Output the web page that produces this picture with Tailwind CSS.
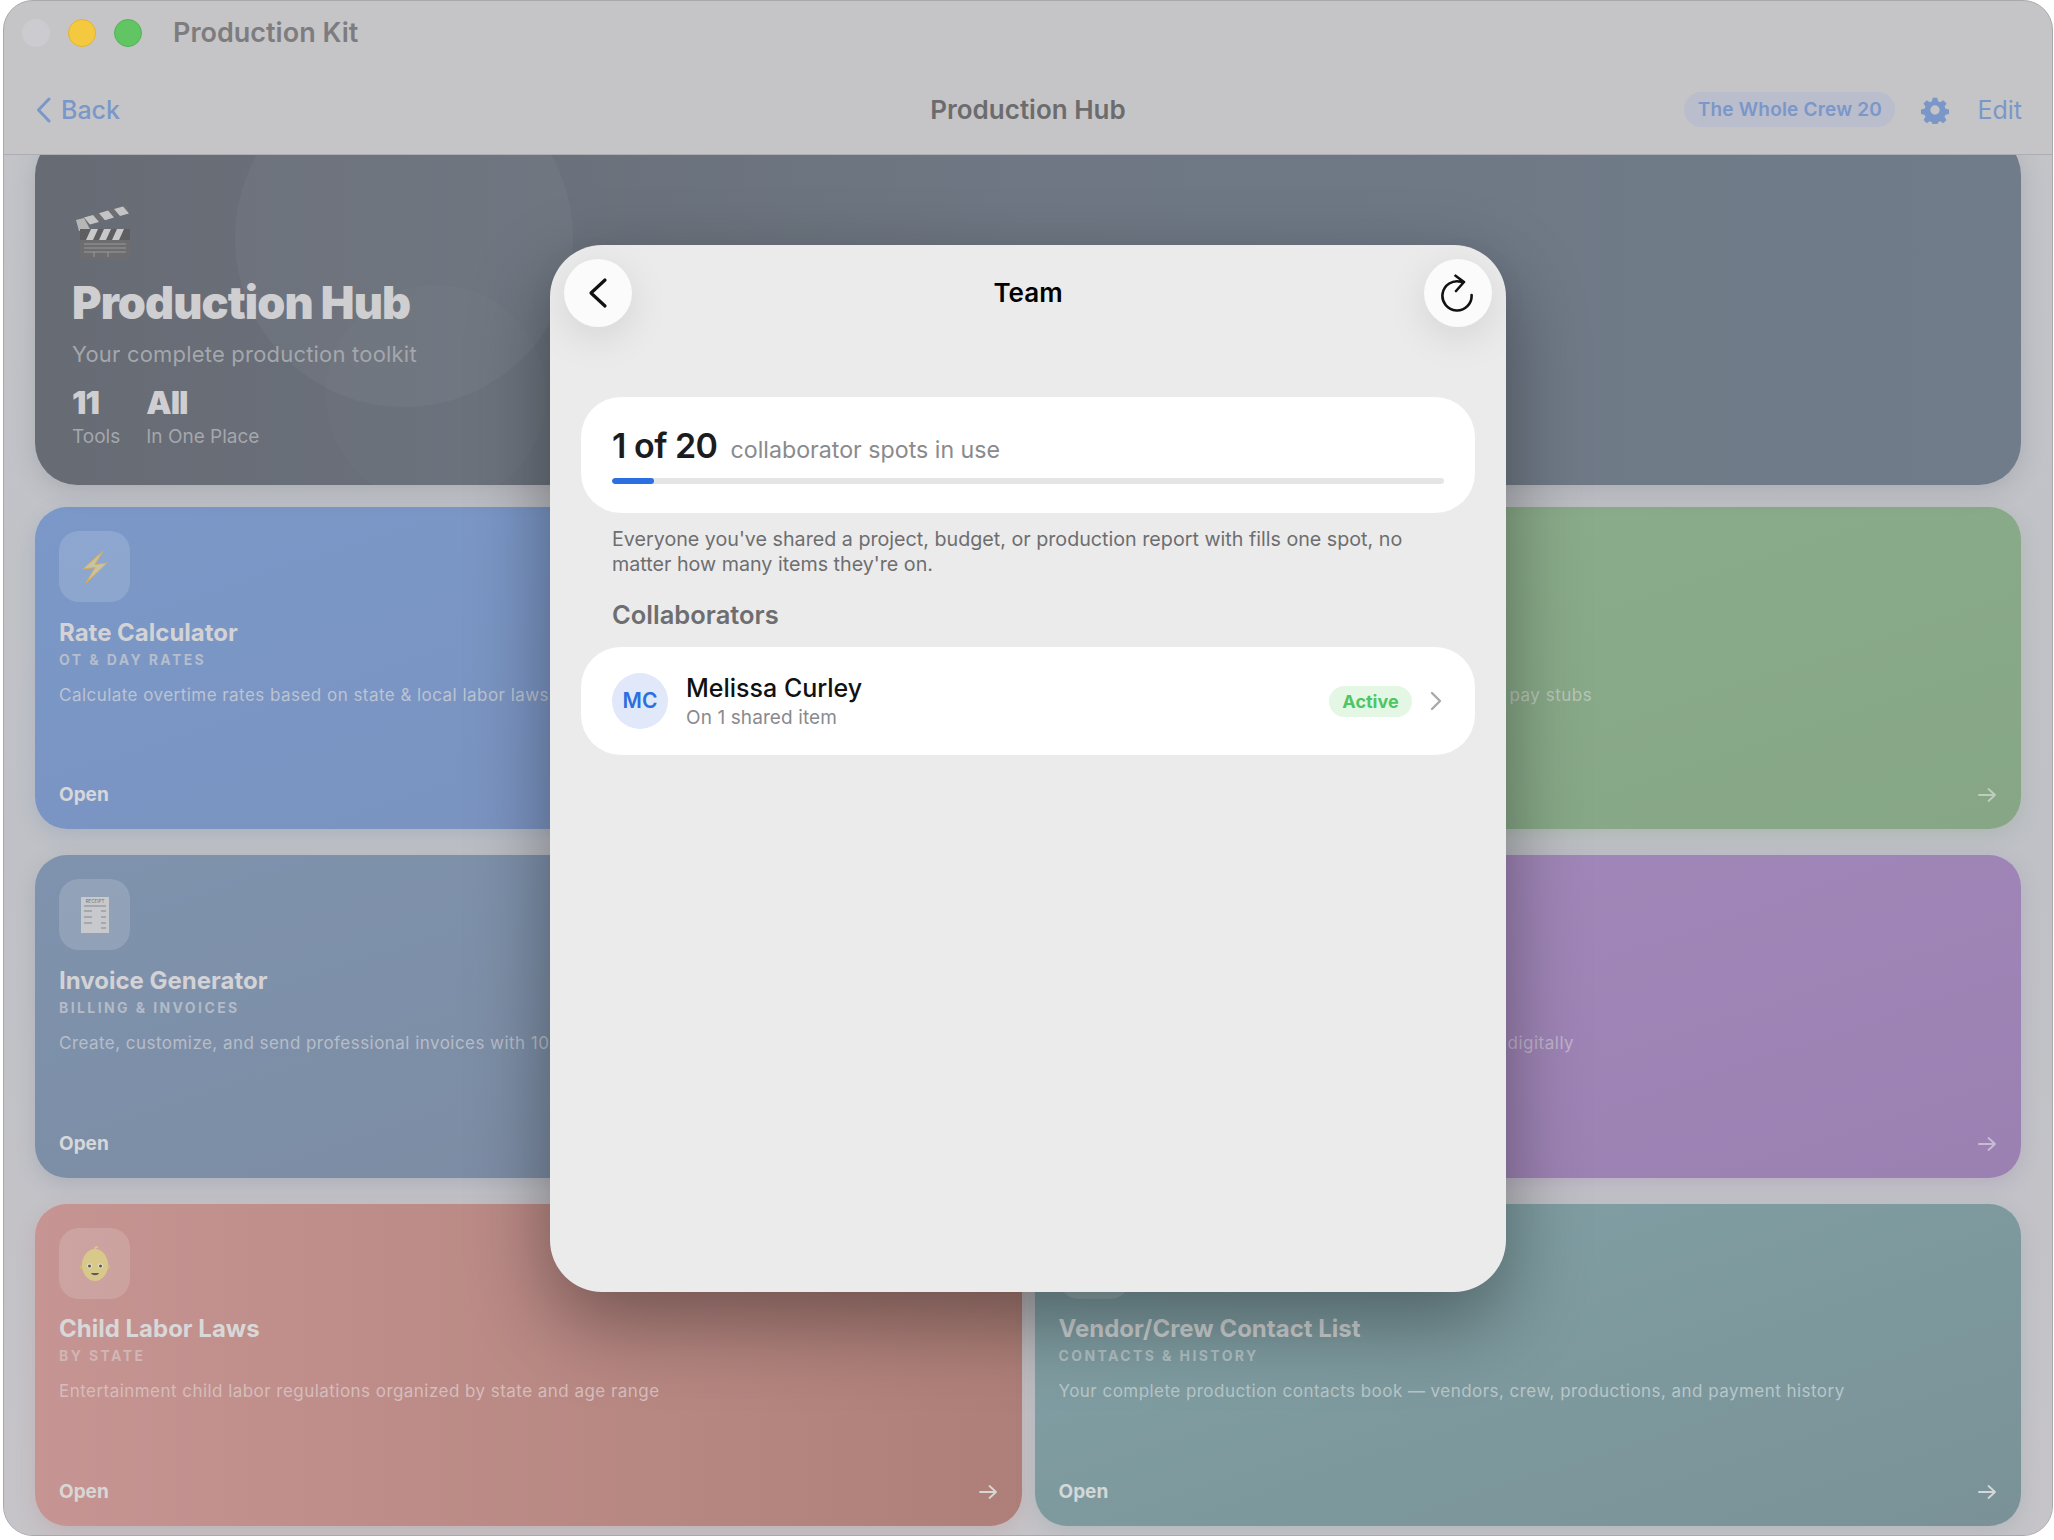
<!DOCTYPE html>
<html lang="en">
<head>
  <meta charset="UTF-8" />
  <meta name="viewport" content="width=device-width, initial-scale=1.0" />
  <title>Production Kit</title>
  <script src="https://cdn.jsdelivr.net/npm/@tailwindcss/browser@4"></script>
</head>
<body class="relative w-[2054px] h-[1540px] overflow-hidden bg-white font-['Inter',sans-serif]">
  <!-- Window -->
  <div class="relative ml-[3px] w-[2050px] h-[1536px] rounded-[30px] overflow-hidden bg-[#c5c5c7] border border-[#a9a9ab] flex flex-col">
    <!-- Title bar -->
    <div class="h-[64px] shrink-0 flex items-center pl-[18px] gap-[18px]">
      <span class="w-[28px] h-[28px] rounded-full bg-[#cbcbd0]"></span>
      <span class="w-[28px] h-[28px] rounded-full bg-[#f5c93f] border border-[#e2b430]"></span>
      <span class="w-[28px] h-[28px] rounded-full bg-[#62c564] border border-[#52b354]"></span>
      <span class="ml-[13px] text-[27px] leading-[32px] font-semibold text-[#7d7d7f]">Production Kit</span>
    </div>
    <!-- Nav bar -->
    <div class="relative h-[90px] shrink-0 flex items-center pl-[32px] pr-[30px] border-b border-[#aeaeb2] text-[#7a97c9]">
      <svg class="w-[16px] h-[26px] mr-[9px]" viewBox="0 0 16 26" fill="none" stroke="currentColor" stroke-width="3" stroke-linecap="round" stroke-linejoin="round"><path d="M13 2 2.500 13 13 24"/></svg>
      <span class="text-[25px] leading-[32px] font-medium">Back</span>
      <span class="absolute left-0 right-0 text-center text-[26px] leading-[32px] font-semibold text-[#6c6c6e]">Production Hub</span>
      <div class="ml-auto flex items-center">
        <span class="h-[35px] w-[211px] pt-[1px] rounded-full bg-[#b9bdcc] flex items-center justify-center text-[19px] font-semibold tracking-[0.2px]">The Whole Crew 20</span>
        <svg class="ml-[26px] w-[28px] h-[28px]" viewBox="0 0 24 24" fill="currentColor"><path fill-rule="evenodd" d="M10 1.500h4l.6 3 1.900.8 2.600-1.700 2.800 2.800-1.700 2.600.8 1.900 3 .6v4l-3 .6-.8 1.900 1.700 2.600-2.800 2.800-2.600-1.700-1.900.8-.6 3h-4l-.6-3-1.900-.8-2.600 1.700-2.800-2.800 1.700-2.600-.8-1.900-3-.6v-4l3-.6.8-1.900-1.700-2.600 2.800-2.800 2.600 1.700 1.900-.8.6-3ZM12 8a4 4 0 1 0 0 8 4 4 0 0 0 0-8Z"/></svg>
        <span class="ml-[28px] text-[25px] leading-[32px]">Edit</span>
      </div>
    </div>

    <!-- Scrolled content -->
    <div class="flex-1 overflow-hidden px-[31px] bg-linear-to-b from-[#c3c4c8] via-[#bfc1c6] to-[#c6c4c8]">
      <!-- Hero -->
      <div class="relative -mt-[22px] h-[352px] rounded-[42px] overflow-hidden bg-linear-to-r from-[#676b74] via-[#6e7783] to-[#707c8a] shadow-[0_6px_24px_rgba(60,70,90,0.18)] pl-[37px] flex flex-col">
        <span class="absolute left-[200px] -top-[64px] w-[338px] h-[338px] rounded-full bg-white/[0.04]"></span>
        <span class="absolute left-[291px] top-[152px] w-[220px] h-[220px] rounded-full bg-white/[0.02]"></span>
        <svg class="relative mt-[71px] ml-[3px] w-[56px] h-[56px]" viewBox="0 0 56 56">
          <path d="M3 15 52 1l2 7-49 15Z" fill="#6f6f71"/>
          <path d="m9 13.500 9-2.600 6 7-9 2.600ZM24 9.200l9-2.600 6 7-9 2.600ZM39 5l9-2.600 6 7-9 2.600Z" fill="#c4c4c5"/>
          <path d="M1 16 9 14l7 13H4Z" fill="#b6b6b7"/>
          <rect x="5" y="25" width="50" height="11" fill="#5e5e60"/>
          <path d="m16 25h7l-5 11h-7ZM29 25h7l-5 11h-7ZM42 25h7l-5 11h-7Z" fill="#c9c9ca"/>
          <rect x="5" y="36" width="50" height="19" rx="2" fill="#6d6d70"/>
          <path d="M9 40h42M9 44h42M9 48h42M19 48v5M33 48v5" stroke="#9a9a9c" stroke-width="1"/>
        </svg>
        <h1 class="relative mt-[15px] text-[45px] leading-[56px] font-black tracking-[-0.9px] text-[#cfcfd1]">Production Hub</h1>
        <p class="relative mt-[9px] text-[22px] leading-[28px] tracking-[0.2px] text-[#a4a7ac]">Your complete production toolkit</p>
        <div class="relative mt-[16px] flex gap-[26px]">
          <div>
            <div class="text-[32px] leading-[38px] font-black tracking-[-1px] text-[#cfcfd1]">11</div>
            <div class="mt-[3px] text-[19px] leading-[24px] text-[#a4a7ac]">Tools</div>
          </div>
          <div>
            <div class="text-[32px] leading-[38px] font-black tracking-[-1px] text-[#cfcfd1]">All</div>
            <div class="mt-[3px] text-[19px] leading-[24px] text-[#a4a7ac]">In One Place</div>
          </div>
        </div>
      </div>

      <!-- Tool cards -->
      <div class="mt-[22px] grid grid-cols-2 gap-x-[13px] gap-y-[26px]">
        <!-- Rate Calculator -->
        <div class="h-[322px] rounded-[32px] px-[24px] pt-[24px] pb-[22px] flex flex-col bg-linear-to-br from-[#7a98c8] to-[#7a92be] shadow-[0_6px_20px_rgba(90,120,170,0.2)]">
          <div class="w-[71px] h-[71px] rounded-[20px] bg-white/15 flex items-center justify-center">
            <svg class="w-[26px] h-[34px]" viewBox="0 0 26 34"><path d="M21 1 1 19l12-1.500L4 33l21-20-12 1.500Z" fill="#c6c4a6" stroke="#dbaa55" stroke-width="1"/></svg>
          </div>
          <h2 class="mt-[16px] text-[24px] leading-[30px] font-bold text-[#d3d3d6]">Rate Calculator</h2>
          <p class="mt-[3px] text-[14px] leading-[18px] font-bold tracking-[2.4px] text-[#b6bdcc]">OT &amp; DAY RATES</p>
          <p class="mt-[14px] text-[17px] leading-[24px] tracking-[0.46px] whitespace-nowrap text-[#bcc3d2]">Calculate overtime rates based on state &amp; local labor laws</p>
          <div class="mt-auto h-[24px] flex items-center justify-between text-[#d6d7da]">
            <span class="text-[19px] leading-[24px] font-bold">Open</span>
          </div>
        </div>
        <!-- Covered by the sheet: only the end of the line shows -->
        <div class="h-[322px] rounded-[32px] px-[24px] pt-[24px] pb-[22px] flex flex-col bg-linear-to-br from-[#8cae8c] to-[#86a686] shadow-[0_6px_20px_rgba(110,140,110,0.2)]">
          <p class="mt-[152px] pl-[451px] text-[17px] leading-[24px] tracking-[0.5px] whitespace-nowrap text-[#b9c5b8]">pay stubs</p>
          <div class="mt-auto h-[24px] flex items-center justify-end text-[#bfcdbf]">
            <svg class="w-[20px] h-[16px]" viewBox="0 0 20 16" fill="none" stroke="currentColor" stroke-width="1.800" stroke-linecap="round" stroke-linejoin="round"><path d="M2 8h16M11.500 2 18 8l-6.500 6"/></svg>
          </div>
        </div>
        <!-- Invoice Generator -->
        <div class="h-[323px] rounded-[32px] px-[24px] pt-[24px] pb-[22px] flex flex-col bg-linear-to-br from-[#7f93ae] to-[#7b8aa0] shadow-[0_6px_20px_rgba(90,105,130,0.2)]">
          <div class="w-[71px] h-[71px] rounded-[20px] bg-white/15 flex items-center justify-center">
            <svg class="w-[28px] h-[36px]" viewBox="0 0 28 36">
              <rect width="28" height="36" fill="#c7c9cc"/>
              <text x="14" y="6" text-anchor="middle" font-size="4.500" font-family="Inter, sans-serif" fill="#6f7276">RECEIPT</text>
              <path d="M3 9h22M3 14h8M20 14h5M3 20h8M20 20h5M3 26h8M20 26h5M20 31h5" stroke="#85888c" stroke-width="1"/>
            </svg>
          </div>
          <h2 class="mt-[16px] text-[24px] leading-[30px] font-bold text-[#d3d3d6]">Invoice Generator</h2>
          <p class="mt-[3px] text-[14px] leading-[18px] font-bold tracking-[2.4px] text-[#b3bbc8]">BILLING &amp; INVOICES</p>
          <p class="mt-[14px] text-[17px] leading-[24px] tracking-[0.46px] whitespace-nowrap text-[#b7bdc9]">Create, customize, and send professional invoices with 10</p>
          <div class="mt-auto h-[24px] flex items-center justify-between text-[#d6d7da]">
            <span class="text-[19px] leading-[24px] font-bold">Open</span>
          </div>
        </div>
        <!-- Covered by the sheet: only the end of the line shows -->
        <div class="h-[323px] rounded-[32px] px-[24px] pt-[24px] pb-[22px] flex flex-col bg-linear-to-br from-[#a388bb] to-[#9b81b2] shadow-[0_6px_20px_rgba(130,100,160,0.2)]">
          <p class="mt-[152px] pl-[449px] text-[17px] leading-[24px] tracking-[0.5px] whitespace-nowrap text-[#c0b3cc]">digitally</p>
          <div class="mt-auto h-[24px] flex items-center justify-end text-[#c8bcd4]">
            <svg class="w-[20px] h-[16px]" viewBox="0 0 20 16" fill="none" stroke="currentColor" stroke-width="1.800" stroke-linecap="round" stroke-linejoin="round"><path d="M2 8h16M11.500 2 18 8l-6.500 6"/></svg>
          </div>
        </div>
        <!-- Child Labor Laws -->
        <div class="h-[322px] rounded-[32px] px-[24px] pt-[24px] pb-[22px] flex flex-col bg-linear-to-r from-[#c69492] to-[#ae7f78] shadow-[0_6px_20px_rgba(170,110,110,0.2)]">
          <div class="w-[71px] h-[71px] rounded-[20px] bg-white/15 flex items-center justify-center">
            <svg class="w-[34px] h-[36px]" viewBox="0 0 34 36">
              <path d="M17 4c-1-3 2-4 3-2" fill="none" stroke="#d8c98b" stroke-width="1.500"/>
              <circle cx="4.500" cy="21" r="2.500" fill="#cdb978"/><circle cx="29.500" cy="21" r="2.500" fill="#cdb978"/>
              <ellipse cx="17" cy="19" rx="13" ry="16" fill="#d8c98b"/>
              <circle cx="11.500" cy="20" r="2.400" fill="#e6e2d2"/><circle cx="22.500" cy="20" r="2.400" fill="#e6e2d2"/>
              <circle cx="11.500" cy="20" r="1.500" fill="#55565a"/><circle cx="22.500" cy="20" r="1.500" fill="#55565a"/>
              <path d="M13 27h8c-1 3-7 3-8 0Z" fill="#5c5c5c"/>
            </svg>
          </div>
          <h2 class="mt-[15px] text-[24px] leading-[30px] font-bold text-[#d8d8d8]">Child Labor Laws</h2>
          <p class="mt-[3px] text-[14px] leading-[18px] font-bold tracking-[2.4px] text-[#d0b6b4]">BY STATE</p>
          <p class="mt-[14px] text-[17px] leading-[24px] tracking-[0.46px] whitespace-nowrap text-[#d6bdbb]">Entertainment child labor regulations organized by state and age range</p>
          <div class="mt-auto h-[24px] flex items-center justify-between text-[#d9d6d6]">
            <span class="text-[19px] leading-[24px] font-bold">Open</span>
            <svg class="w-[20px] h-[16px]" viewBox="0 0 20 16" fill="none" stroke="currentColor" stroke-width="1.800" stroke-linecap="round" stroke-linejoin="round"><path d="M2 8h16M11.500 2 18 8l-6.500 6"/></svg>
          </div>
        </div>
        <!-- Vendor/Crew Contact List -->
        <div class="h-[322px] rounded-[32px] px-[24px] pt-[24px] pb-[22px] flex flex-col bg-linear-to-br from-[#81a1a6] to-[#7a9297] shadow-[0_6px_20px_rgba(100,135,140,0.2)]">
          <div class="w-[71px] h-[71px] rounded-[20px] bg-white/15"></div>
          <h2 class="mt-[15px] text-[24px] leading-[30px] font-bold text-[#cfd3d4]">Vendor/Crew Contact List</h2>
          <p class="mt-[3px] text-[14px] leading-[18px] font-bold tracking-[2.4px] text-[#b2c0c2]">CONTACTS &amp; HISTORY</p>
          <p class="mt-[14px] text-[17px] leading-[24px] tracking-[0.46px] whitespace-nowrap text-[#b8c6c8]">Your complete production contacts book — vendors, crew, productions, and payment history</p>
          <div class="mt-auto h-[24px] flex items-center justify-between text-[#d3d8d9]">
            <span class="text-[19px] leading-[24px] font-bold">Open</span>
            <svg class="w-[20px] h-[16px]" viewBox="0 0 20 16" fill="none" stroke="currentColor" stroke-width="1.800" stroke-linecap="round" stroke-linejoin="round"><path d="M2 8h16M11.500 2 18 8l-6.500 6"/></svg>
          </div>
        </div>
      </div>
    </div>

    <!-- Team sheet -->
    <div class="absolute left-[546px] top-[244px] w-[956px] h-[1047px] rounded-[52px] bg-[#ebebeb] shadow-[0_30px_80px_rgba(0,0,0,0.38)] px-[31px]">
      <div class="relative -mx-[31px] h-[96px] flex items-start justify-between px-[14px] pt-[14px]">
        <button class="w-[68px] h-[68px] rounded-full bg-[#fbfbfb] shadow-[0_10px_40px_rgba(0,0,0,0.1)] flex items-center justify-center">
          <svg class="w-[20px] h-[32px]" viewBox="0 0 20 32" fill="none" stroke="#111" stroke-width="3.200" stroke-linecap="round" stroke-linejoin="round"><path d="M17 3 3 16l14 13"/></svg>
        </button>
        <span class="absolute left-0 right-0 top-[32px] text-center text-[26px] leading-[32px] font-semibold text-black">Team</span>
        <button class="w-[68px] h-[68px] rounded-full bg-[#fbfbfb] shadow-[0_10px_40px_rgba(0,0,0,0.1)] flex items-center justify-center">
          <svg class="mt-[2px] w-[36px] h-[40px]" viewBox="0 0 36 40" fill="none" stroke="#111" stroke-width="2.600" stroke-linecap="round" stroke-linejoin="round"><path d="M21 7.800A14.600 14.600 0 1 0 31.600 21M15.500 1.700 24 8l-8 9"/></svg>
        </button>
      </div>

      <!-- Usage -->
      <div class="mt-[56px] h-[116px] rounded-[40px] bg-white px-[31px] pt-[28px]">
        <div class="flex items-baseline gap-[13px]">
          <span class="text-[34px] leading-[42px] font-semibold tracking-[-0.5px] text-[#1c1c1e]">1 of 20</span>
          <span class="text-[23.200px] leading-[30px] text-[#8a8a8e]">collaborator spots in use</span>
        </div>
        <div class="mt-[11px] h-[6px] rounded-full bg-[#e5e5e5] overflow-hidden">
          <div class="h-full rounded-full bg-[#2c6fe0]" style="width: 5%"></div>
        </div>
      </div>

      <p class="mt-[14px] px-[31px] text-[19.700px] leading-[25px] text-[#6e6e70]">Everyone you've shared a project, budget, or production report with fills one spot, no matter how many items they're on.</p>
      <h3 class="mt-[22px] px-[31px] text-[25.500px] leading-[32px] font-semibold text-[#6e6e70]">Collaborators</h3>

      <!-- Collaborator row -->
      <div class="mt-[16px] h-[108px] rounded-[40px] bg-white pl-[31px] pr-[32px] flex items-center">
        <div class="w-[56px] h-[56px] rounded-full bg-[#e0e8f9] flex items-center justify-center text-[21px] font-semibold text-[#2c6fe0]">MC</div>
        <div class="ml-[18px]">
          <div class="text-[25px] leading-[30px] font-medium text-[#111]">Melissa Curley</div>
          <div class="mt-[3px] text-[19px] leading-[24px] tracking-[0.1px] text-[#8a8a8e]">On 1 shared item</div>
        </div>
        <span class="ml-auto h-[31px] w-[83px] rounded-full bg-[#e4f6e4] flex items-center justify-center text-[18px] font-bold text-[#4cc764]">Active</span>
        <svg class="ml-[17px] w-[14px] h-[20px]" viewBox="0 0 14 20" fill="none" stroke="#a9a9ad" stroke-width="2.400" stroke-linecap="round" stroke-linejoin="round"><path d="m3 2 8 8-8 8"/></svg>
      </div>
    </div>
  </div>
</body>
</html>
